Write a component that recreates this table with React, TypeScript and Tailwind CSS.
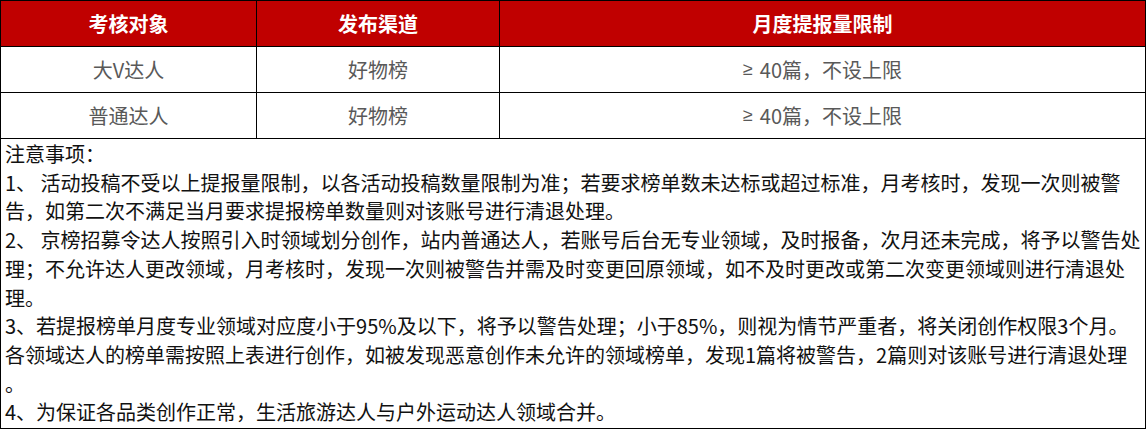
const rows = [
  { who: "大V达人", channel: "好物榜", limit: "40篇，不设上限" },
  { who: "普通达人", channel: "好物榜", limit: "40篇，不设上限" },
];

const notes = [
  "注意事项：",
  "1、 活动投稿不受以上提报量限制，以各活动投稿数量限制为准；若要求榜单数未达标或超过标准，月考核时，发现一次则被警",
  "告，如第二次不满足当月要求提报榜单数量则对该账号进行清退处理。",
  "2、 京榜招募令达人按照引入时领域划分创作，站内普通达人，若账号后台无专业领域，及时报备，次月还未完成，将予以警告处",
  "理；不允许达人更改领域，月考核时，发现一次则被警告并需及时变更回原领域，如不及时更改或第二次变更领域则进行清退处",
  "理。",
  "3、若提报榜单月度专业领域对应度小于95%及以下，将予以警告处理；小于85%，则视为情节严重者，将关闭创作权限3个月。",
  "各领域达人的榜单需按照上表进行创作，如被发现恶意创作未允许的领域榜单，发现1篇将被警告，2篇则对该账号进行清退处理",
  "。",
  "4、为保证各品类创作正常，生活旅游达人与户外运动达人领域合并。",
];

const App = () => {
  return (
    <div className="w-[1146px] h-[429px] bg-white font-['Noto_Sans_CJK_SC','Microsoft_YaHei',sans-serif]">
      <div className="border border-black grid grid-cols-[256px_243px_1fr] text-[20px]">
        <div className="h-[46px] bg-[#c00000] border-r border-b border-black flex items-center justify-center text-white font-bold">
          考核对象
        </div>
        <div className="h-[46px] bg-[#c00000] border-r border-b border-black flex items-center justify-center text-white font-bold">
          发布渠道
        </div>
        <div className="h-[46px] bg-[#c00000] border-b border-black flex items-center justify-center text-white font-bold">
          月度提报量限制
        </div>
        {rows.map((row, index) => (
          <>
            <div
              key={`a${index}`}
              className="h-[46px] border-r border-b border-black flex items-center justify-center text-[#595959]"
            >
              {row.who}
            </div>
            <div
              key={`b${index}`}
              className="h-[46px] border-r border-b border-black flex items-center justify-center text-[#595959]"
            >
              {row.channel}
            </div>
            <div
              key={`c${index}`}
              className="h-[46px] border-b border-black flex items-center justify-center text-[#595959]"
            >
              <span className="font-['Liberation_Sans',sans-serif] text-[18px] mr-[7px]">≥</span>
              {row.limit}
            </div>
          </>
        ))}
        <div className="col-span-3 h-[289px] px-[4px] pt-[1px] text-[#111] leading-[28.7px] whitespace-nowrap">
          {notes.map((line, index) => (
            <div key={index}>{line}</div>
          ))}
        </div>
      </div>
    </div>
  );
};

export default App;
